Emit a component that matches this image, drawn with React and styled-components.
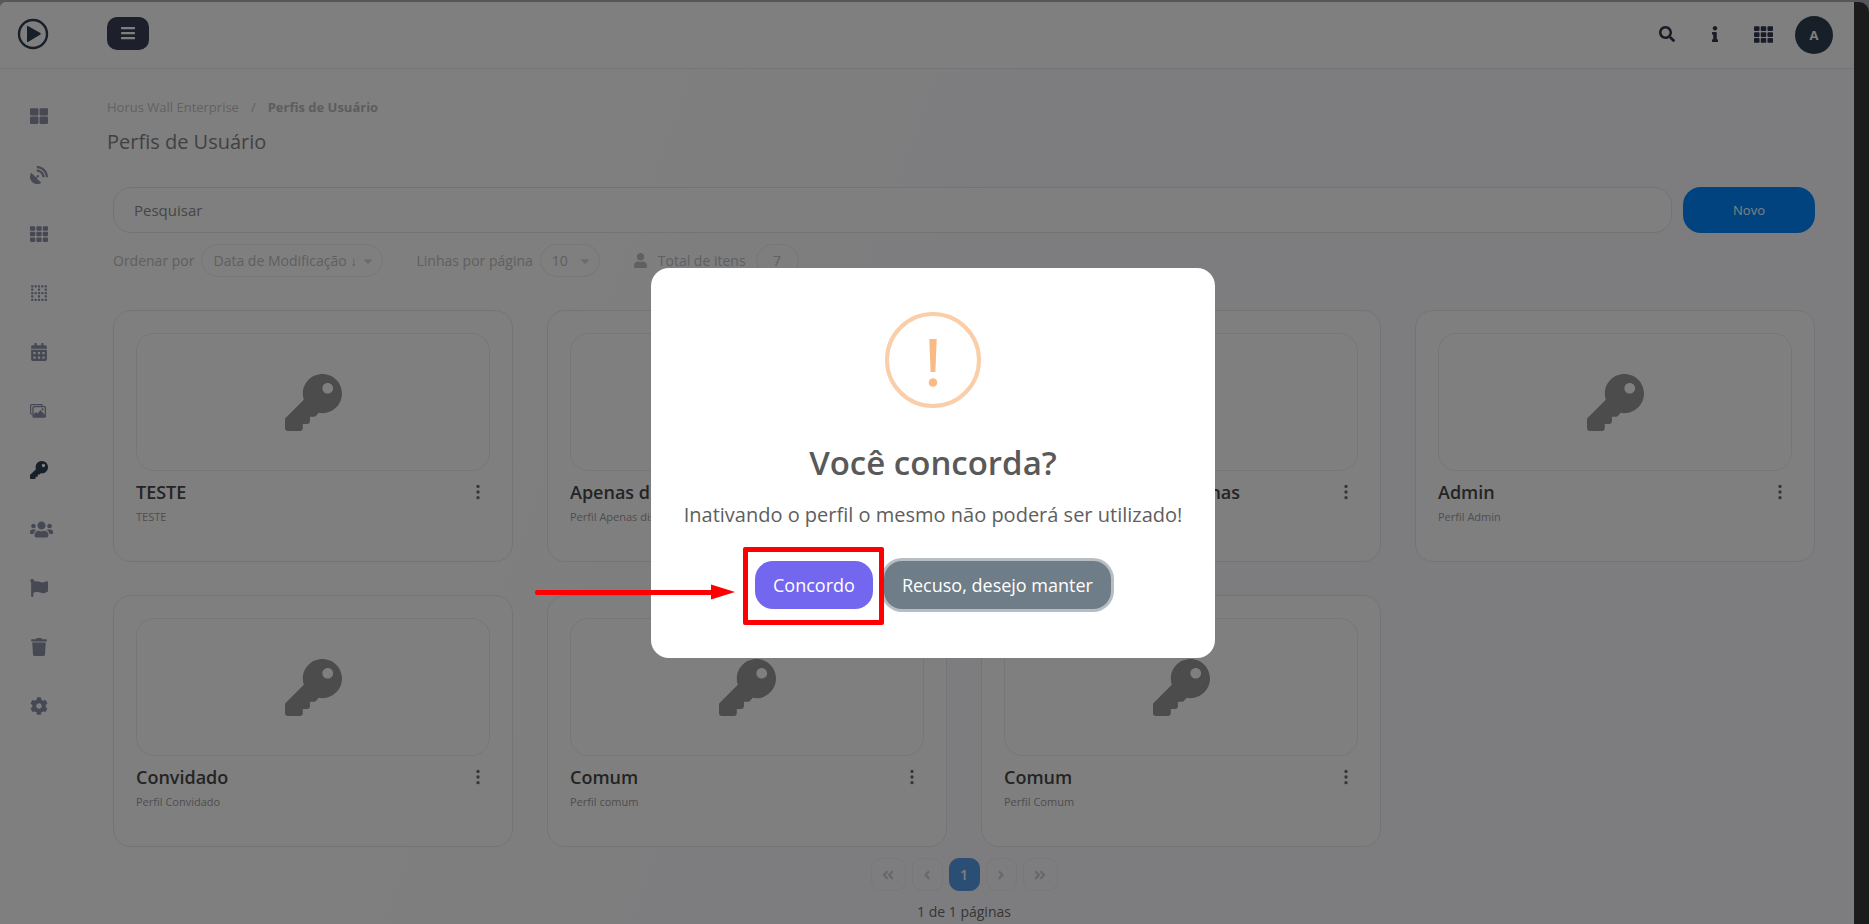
import { useState } from 'react'
import styled, { createGlobalStyle, css } from 'styled-components'
import {
  FaAngleDoubleLeft,
  FaAngleDoubleRight,
  FaAngleLeft,
  FaAngleRight,
  FaBars,
  FaBorderNone,
  FaCalendarAlt,
  FaCaretDown,
  FaCog,
  FaFlag,
  FaInfo,
  FaKey,
  FaSatelliteDish,
  FaSearch,
  FaTh,
  FaThLarge,
  FaTrash,
  FaUser,
  FaUsers,
} from 'react-icons/fa'
import { BsThreeDotsVertical } from 'react-icons/bs'

const GlobalStyle = createGlobalStyle`
  * {
    box-sizing: border-box;
  }

  body {
    margin: 0;
    overflow: hidden;
    background-color: #aeacb6;
    font-family: 'Open Sans', 'Noto Sans', sans-serif;
    font-size: 14px;
    line-height: 20px;
    color: #8a8a8a;
  }

  button, input, select {
    font-family: inherit;
  }
`

const Window = styled.div`
  display: flex;
  min-height: 100vh;
  padding-top: 2px;
`

const Page = styled.div`
  flex: 1;
  min-width: 0;
  display: flex;
  flex-direction: column;
  background: linear-gradient(110deg, #ffffff 25%, #fafafe 55%);
  border-top-left-radius: 6px;
`

const ScrollTrack = styled.div`
  width: 15px;
  background-color: #363636;
  border-top-right-radius: 10px;
`

const Header = styled.header`
  display: flex;
  align-items: center;
  height: 67px;
  padding: 0 21px 0 17px;
  background-color: #ffffff;
  border-bottom: 1px solid #e8e8e8;
  border-top-left-radius: 6px;
`

const Logo = styled.a`
  display: flex;
  width: 90px;
  margin-bottom: 2px;
`

const MenuButton = styled.button`
  display: flex;
  align-items: center;
  justify-content: center;
  width: 42px;
  height: 33px;
  padding: 0;
  border: 0;
  border-radius: 10px;
  margin-bottom: 4px;
  background-color: #3b4157;
  color: #ffffff;
  font-size: 16px;
  cursor: pointer;
`

const Actions = styled.div`
  display: flex;
  align-items: center;
  margin-left: auto;
`

const IconButton = styled.button`
  display: flex;
  align-items: center;
  justify-content: center;
  width: 48px;
  margin-bottom: 2px;
  padding: 0;
  border: 0;
  background: none;
  color: #32394f;
  font-size: ${props => props.$size || 16}px;
  cursor: pointer;
`

const Avatar = styled.button`
  width: 38px;
  height: 38px;
  margin-left: 8px;
  padding: 0;
  border: 0;
  border-radius: 50%;
  background-color: #2f4050;
  color: #ffffff;
  font-size: 13px;
  font-weight: 700;
`

const Body = styled.div`
  display: flex;
  flex: 1;
`

const Sidebar = styled.nav`
  display: flex;
  flex-direction: column;
  width: 107px;
  padding: 29px 0 0 30px;
  gap: 23px;
`

const NavLink = styled.a`
  display: flex;
  align-items: center;
  width: 36px;
  height: 36px;
  font-size: 18px;
  color: ${props => (props.$active ? '#2f4050' : '#8c90a8')};
`

const Main = styled.main`
  flex: 1;
  min-width: 0;
  padding: 28px 39px 0 0;
`

const Breadcrumb = styled.div`
  display: flex;
  gap: 12px;
  font-size: 13px;
  color: #c4c4c4;

  strong {
    font-weight: 700;
    color: #bababa;
  }
`

const PageTitle = styled.h1`
  margin: 12px 0 32px;
  font-size: 20px;
  font-weight: 400;
  line-height: 26px;
  color: #838383;
`

const Content = styled.div`
  padding-left: 6px;
`

const SearchRow = styled.form`
  display: flex;
  gap: 11px;
`

const SearchInput = styled.input`
  flex: 1;
  min-width: 0;
  height: 46px;
  padding: 0 20px;
  border: 1px solid #e6e6e6;
  border-radius: 18px;
  background-color: #ffffff;
  font-size: 15px;
  color: #838383;

  &::placeholder {
    color: #8c8c8c;
  }
`

const NewButton = styled.button`
  width: 132px;
  height: 46px;
  border: 0;
  border-radius: 18px;
  background-color: #0087ff;
  color: #ffffff;
  font-size: 13px;
  cursor: pointer;
`

const Filters = styled.div`
  display: flex;
  align-items: center;
  margin: 11px 0 33px;
  color: #c0c0c0;
`

const FilterLabel = styled.label`
  margin-right: 7px;
`

const pill = css`
  height: 33px;
  border: 1px solid #ececec;
  border-radius: 17px;
  background: none;
  color: #c0c0c0;
  font-size: 14px;
`

const SelectBox = styled.span`
  position: relative;
  margin-right: 33px;

  svg {
    position: absolute;
    right: 8px;
    top: 10px;
    color: #d8d8d8;
    pointer-events: none;
  }
`

const Select = styled.select`
  ${pill}
  width: ${props => props.$width}px;
  padding: 0 11px;
  appearance: none;
`

const Total = styled.span`
  display: flex;
  align-items: center;
  gap: 10px;

  svg {
    font-size: 15px;
  }
`

const TotalBadge = styled.output`
  ${pill}
  display: flex;
  align-items: center;
  justify-content: center;
  width: 43px;
`

const Grid = styled.div`
  display: grid;
  grid-template-columns: repeat(4, 1fr);
  gap: 33px 34px;
`

const Card = styled.article`
  min-width: 0;
  height: 252px;
  padding: 22px;
  border: 1px solid #e9e9e9;
  border-radius: 18px;
  background-color: #ffffff;
`

const Thumb = styled.div`
  display: flex;
  align-items: center;
  justify-content: center;
  height: 138px;
  border: 1px solid #ececec;
  border-radius: 18px;
  color: #989898;
  font-size: 57px;
`

const CardHead = styled.div`
  display: flex;
  align-items: center;
  justify-content: space-between;
  margin-top: 9px;
`

const CardTitle = styled.h2`
  margin: 0;
  font-size: 18px;
  font-weight: 600;
  line-height: 24px;
  color: #484848;
`

const CardMenu = styled.button`
  display: flex;
  padding: 0 3px;
  border: 0;
  background: none;
  color: #6c6c6c;
  font-size: 18px;
`

const CardText = styled.p`
  margin: 5px 0 0;
  font-size: 11px;
  line-height: 16px;
  color: #9c9c9c;
`

const Pagination = styled.div`
  display: flex;
  justify-content: center;
  gap: 6px;
  margin: 11px 0;
`

const PageButton = styled.button`
  display: flex;
  align-items: center;
  justify-content: center;
  width: ${props => (props.$wide ? 35 : 31)}px;
  height: 33px;
  padding: 0;
  border: 1px solid ${props => (props.$current ? '#579ee8' : '#f0f0f2')};
  border-radius: 10px;
  background-color: ${props => (props.$current ? '#579ee8' : 'transparent')};
  color: ${props => (props.$current ? '#ffffff' : '#d0d0d2')};
  font-size: 14px;
  font-weight: 600;
`

const PageInfo = styled.p`
  margin: 0;
  text-align: center;
  color: #6c6c6c;
`

const Backdrop = styled.div`
  position: fixed;
  inset: 0;
  display: flex;
  align-items: center;
  justify-content: center;
  padding-top: 2px;
  background-color: rgba(0, 0, 0, 0.5);
`

const Dialog = styled.section`
  display: flex;
  flex-direction: column;
  align-items: center;
  width: 564px;
  height: 390px;
  margin-right: 3px;
  padding-top: 44px;
  border-radius: 18px;
  background-color: #ffffff;
  color: #5e5e5e;
`

const DialogTitle = styled.h2`
  margin: 32px 0 0;
  font-size: 33px;
  font-weight: 600;
  line-height: 46px;
  color: #595959;
`

const DialogText = styled.p`
  margin: 15px 0 0;
  font-size: 20px;
  line-height: 28px;
`

const DialogActions = styled.div`
  display: flex;
  gap: 11px;
  margin-top: 32px;
`

const DialogButton = styled.button`
  height: 48px;
  padding: 0 18px;
  border: 0;
  border-radius: 18px;
  background-color: ${props => (props.$primary ? '#7367f0' : '#6e7d88')};
  box-shadow: ${props => (props.$primary ? 'none' : '0 0 0 3px #b6bec3')};
  color: #ffffff;
  font-size: 18px;
  font-weight: 400;
  cursor: pointer;
`

// Destaque em volta do botão, com a seta que chega pela esquerda
const Highlight = styled.span`
  position: relative;
  display: flex;

  &::after {
    content: '';
    position: absolute;
    z-index: 1;
    inset: -14px -11px -16px -12px;
    border: 5px solid #ff0000;
    border-radius: 2px;
    pointer-events: none;
  }
`

const Arrow = styled.svg`
  position: absolute;
  right: 138px;
  top: 22px;
`

const LogoIcon = () => (
  <svg width="32" height="32" viewBox="0 0 32 32">
    <circle cx="16" cy="16" r="14" fill="none" stroke="#2f4050" strokeWidth="2.4" />
    <path d="M10 8.600q0-1.200 1-.6l12.400 7.100q1 .8 0 1.500l-12.400 7.300q-1 .5-1-.6z" fill="#2f4050" />
  </svg>
)

const ImagesIcon = () => (
  <svg width="16" height="14" viewBox="0 0 16 14" fill="none" stroke="currentColor">
    <path d="M2.500 10.500Q.6 10.400.6 9V1.600Q.6.600 1.600.600H12V2" strokeWidth="1.200" />
    <rect x="3" y="2.600" width="12.400" height="10.600" rx="1" strokeWidth="1.300" />
    <path d="M3.500 13V10.500L6 8l1.500 1.500L10.500 6 15 11v2z" fill="currentColor" stroke="none" />
    <circle cx="12.600" cy="5.300" r="1.100" fill="currentColor" stroke="none" />
  </svg>
)

const WarningIcon = () => (
  <svg width="96" height="96" viewBox="0 0 96 96">
    <circle cx="48" cy="48" r="46" fill="none" stroke="#facea8" strokeWidth="4" />
    <path d="M44.300 27h7.400l-1.300 33h-4.800z" fill="#f8bb86" />
    <circle cx="48" cy="70.500" r="4.300" fill="#f8bb86" />
  </svg>
)

const navItems = [
  { label: 'Painel', icon: <FaThLarge /> },
  { label: 'Transmissão', icon: <FaSatelliteDish /> },
  { label: 'Aplicativos', icon: <FaTh /> },
  { label: 'Grade', icon: <FaBorderNone /> },
  { label: 'Calendário', icon: <FaCalendarAlt /> },
  { label: 'Imagens', icon: <ImagesIcon /> },
  { label: 'Perfis', icon: <FaKey />, active: true },
  { label: 'Usuários', icon: <FaUsers size={23} /> },
  { label: 'Marcadores', icon: <FaFlag /> },
  { label: 'Lixeira', icon: <FaTrash /> },
  { label: 'Configurações', icon: <FaCog /> },
]

const profiles = [
  { name: 'TESTE', text: 'TESTE' },
  { name: 'Apenas dispositivos', text: 'Perfil Apenas dispositivos' },
  { name: 'Apenas Telas e Campanhas', text: 'Perfil Campanhas' },
  { name: 'Admin', text: 'Perfil Admin' },
  { name: 'Convidado', text: 'Perfil Convidado' },
  { name: 'Comum', text: 'Perfil comum' },
  { name: 'Comum', text: 'Perfil Comum' },
]

const App = () => {
  const [open, setOpen] = useState(true)
  const close = () => setOpen(false)

  return (
    <>
      <GlobalStyle />
      <Window>
        <Page>
          <Header>
            <Logo href="#" aria-label="Início"><LogoIcon /></Logo>
            <MenuButton aria-label="Menu"><FaBars /></MenuButton>
            <Actions>
              <IconButton aria-label="Buscar"><FaSearch /></IconButton>
              <IconButton aria-label="Informações"><FaInfo /></IconButton>
              <IconButton aria-label="Aplicativos" $size={19}><FaTh /></IconButton>
              <Avatar>A</Avatar>
            </Actions>
          </Header>
          <Body>
            <Sidebar>
              {navItems.map(item => (
                <NavLink key={item.label} href="#" aria-label={item.label} $active={item.active}>
                  {item.icon}
                </NavLink>
              ))}
            </Sidebar>
            <Main>
              <Breadcrumb>
                <span>Horus Wall Enterprise</span>
                <span>/</span>
                <strong>Perfis de Usuário</strong>
              </Breadcrumb>
              <PageTitle>Perfis de Usuário</PageTitle>
              <Content>
                <SearchRow onSubmit={e => e.preventDefault()}>
                  <SearchInput type="text" placeholder="Pesquisar" aria-label="Pesquisar" />
                  <NewButton type="button">Novo</NewButton>
                </SearchRow>
                <Filters>
                  <FilterLabel htmlFor="order">Ordenar por</FilterLabel>
                  <SelectBox>
                    <Select id="order" $width={182}>
                      <option>Data de Modificação ↓</option>
                    </Select>
                    <FaCaretDown />
                  </SelectBox>
                  <FilterLabel htmlFor="lines">Linhas por página</FilterLabel>
                  <SelectBox>
                    <Select id="lines" $width={60}>
                      <option>10</option>
                    </Select>
                    <FaCaretDown />
                  </SelectBox>
                  <Total>
                    <FaUser />
                    <span>Total de itens</span>
                    <TotalBadge>7</TotalBadge>
                  </Total>
                </Filters>
                <Grid>
                  {profiles.map((profile, index) => (
                    <Card key={index}>
                      <Thumb><FaKey /></Thumb>
                      <CardHead>
                        <CardTitle>{profile.name}</CardTitle>
                        <CardMenu aria-label="Opções"><BsThreeDotsVertical /></CardMenu>
                      </CardHead>
                      <CardText>{profile.text}</CardText>
                    </Card>
                  ))}
                </Grid>
                <Pagination>
                  <PageButton $wide aria-label="Primeira"><FaAngleDoubleLeft /></PageButton>
                  <PageButton aria-label="Anterior"><FaAngleLeft /></PageButton>
                  <PageButton $current>1</PageButton>
                  <PageButton aria-label="Próxima"><FaAngleRight /></PageButton>
                  <PageButton $wide aria-label="Última"><FaAngleDoubleRight /></PageButton>
                </Pagination>
                <PageInfo>1 de 1 páginas</PageInfo>
              </Content>
            </Main>
          </Body>
        </Page>
        <ScrollTrack />
      </Window>

      {open && (
        <Backdrop>
          <Dialog role="dialog" aria-modal="true" aria-labelledby="dialog-title">
            <WarningIcon />
            <DialogTitle id="dialog-title">Você concorda?</DialogTitle>
            <DialogText>Inativando o perfil o mesmo não poderá ser utilizado!</DialogText>
            <DialogActions>
              <Highlight>
                <Arrow width="200" height="18" viewBox="0 0 200 18" fill="#ff0000">
                  <rect y="7" width="180" height="5" rx="2" />
                  <path d="M176 1.500 200 9 176 16.500z" />
                </Arrow>
                <DialogButton $primary onClick={close}>Concordo</DialogButton>
              </Highlight>
              <DialogButton onClick={close}>Recuso, desejo manter</DialogButton>
            </DialogActions>
          </Dialog>
        </Backdrop>
      )}
    </>
  )
}

export default App
